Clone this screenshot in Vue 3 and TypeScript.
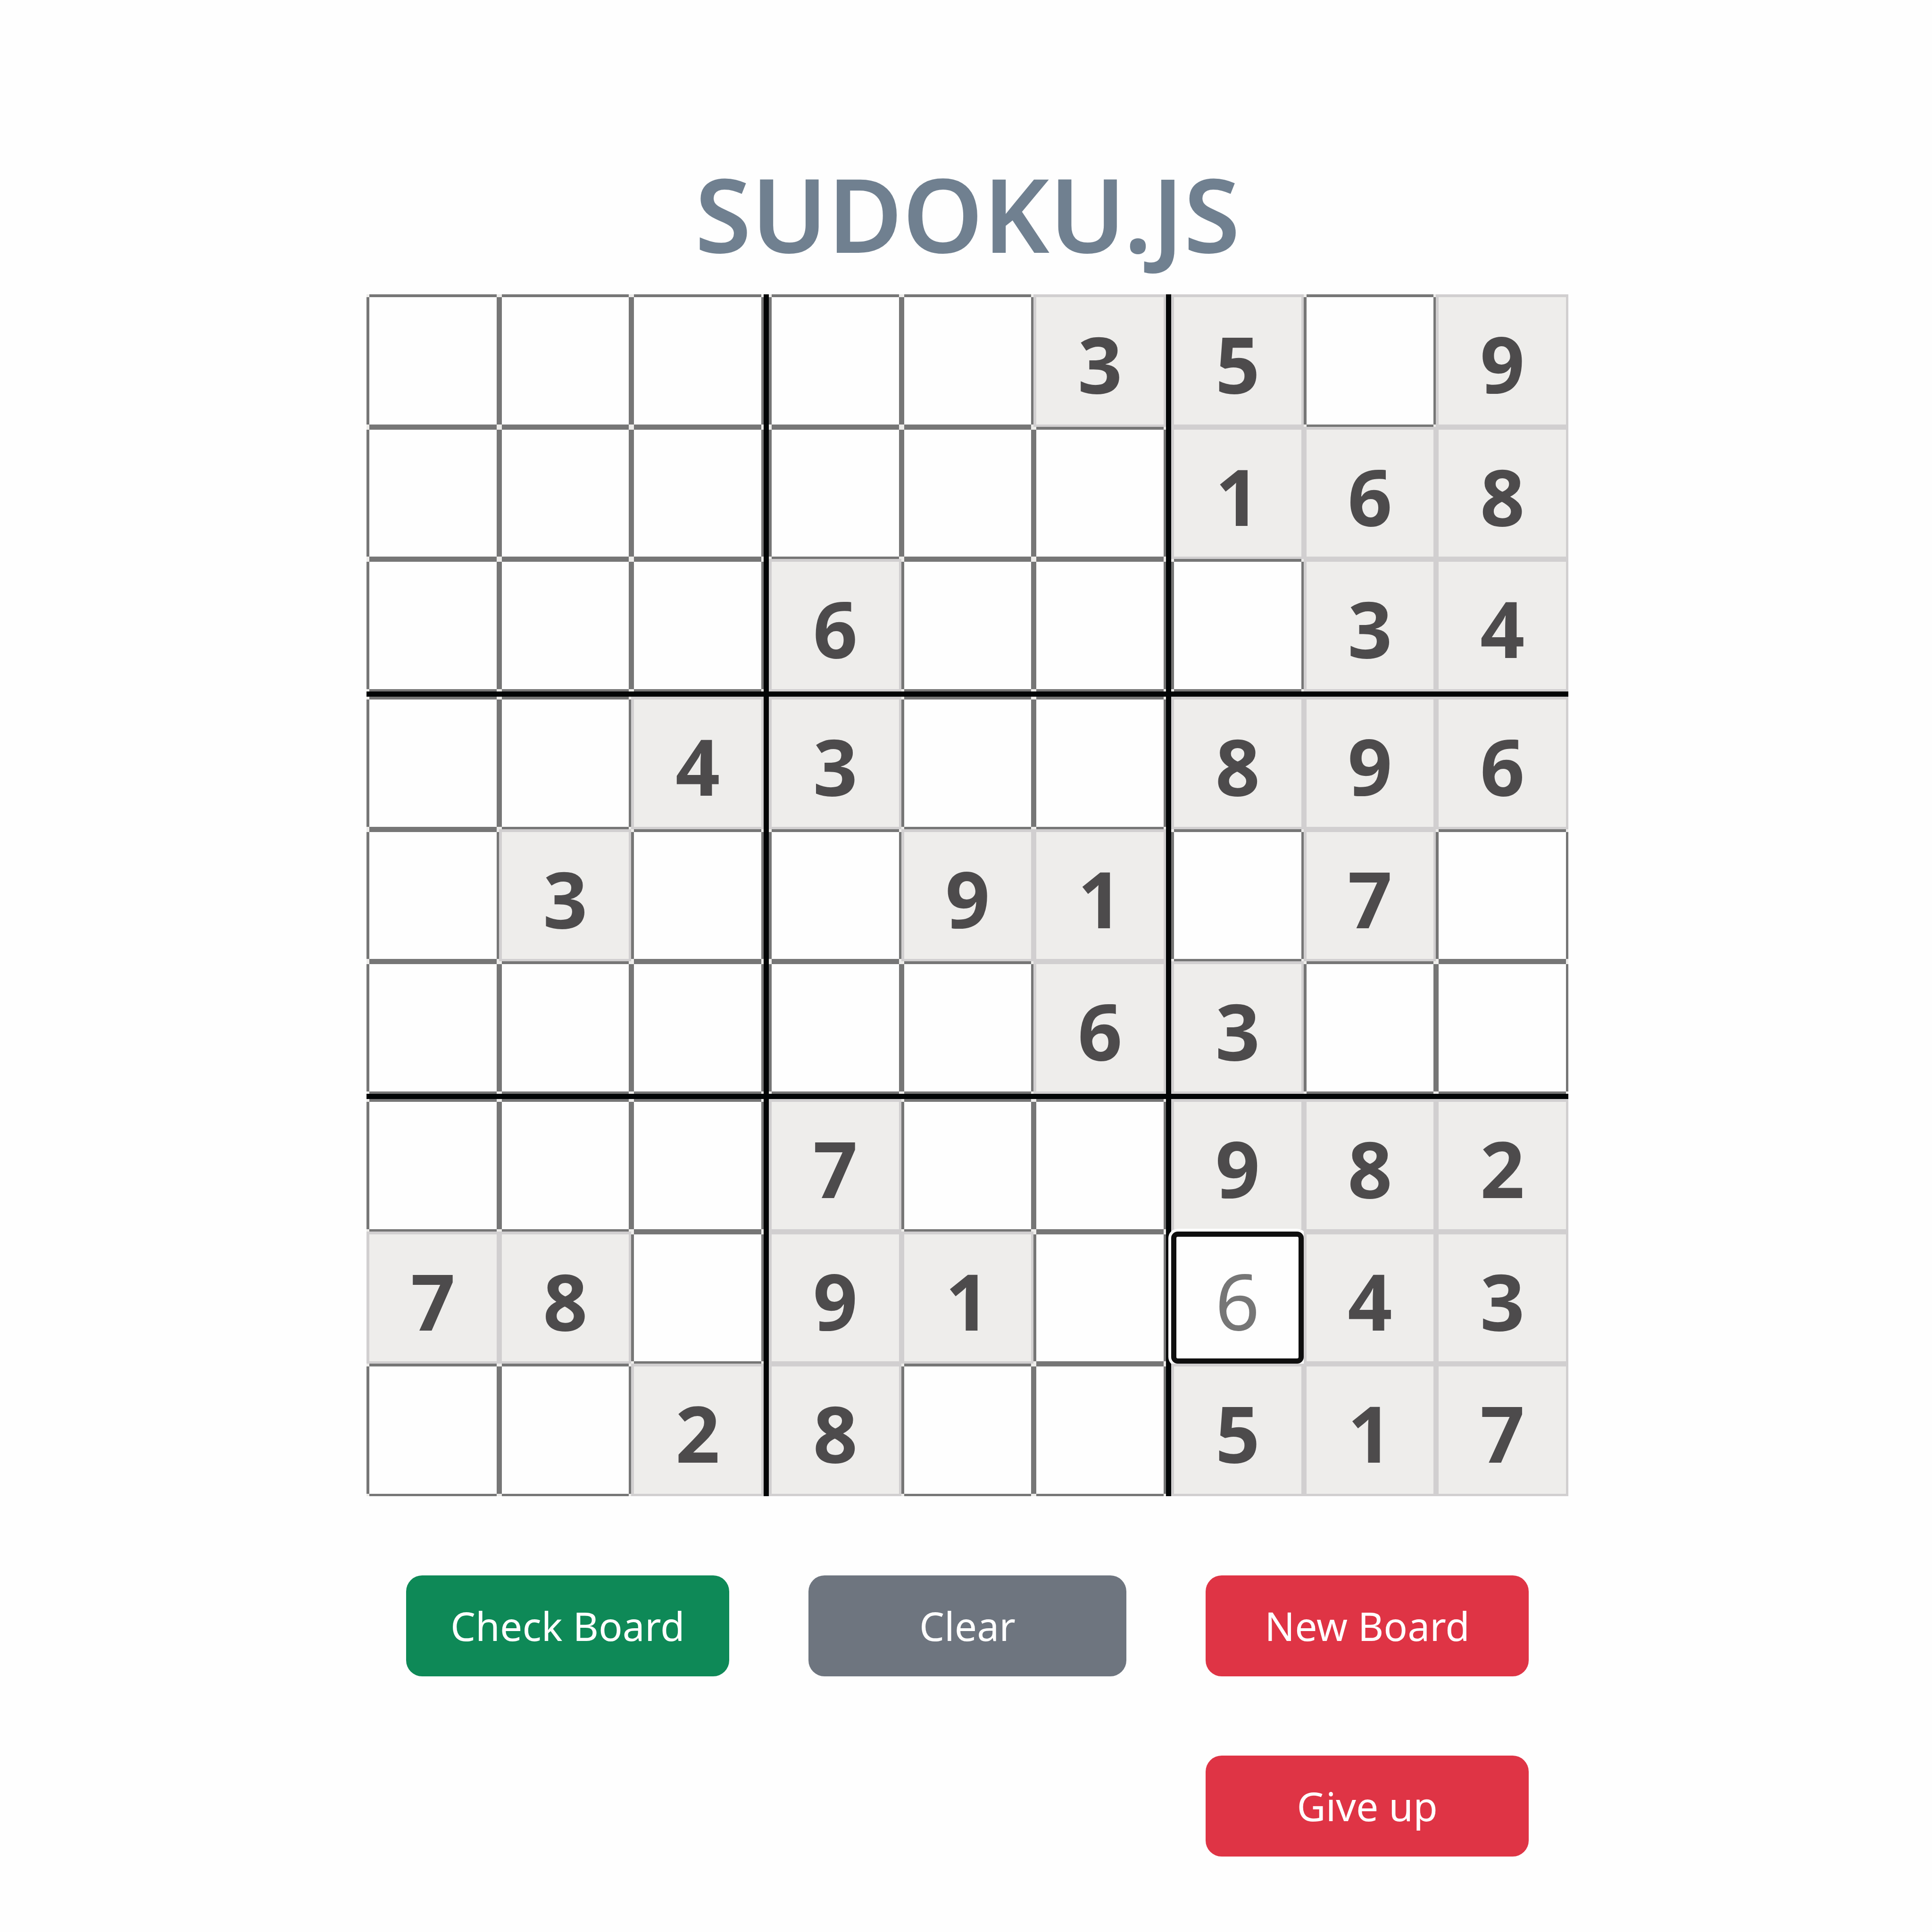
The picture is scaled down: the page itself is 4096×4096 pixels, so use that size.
<script setup lang="ts">
import { reactive } from 'vue'

interface Cell {
  row: number
  col: number
  value: string
  given: boolean
  active: boolean
}

const puzzle: string[] = [
  '.....35.9',
  '......168',
  '...6...34',
  '..43..896',
  '.3..91.7.',
  '.....63..',
  '...7..982',
  '78.91..43',
  '..28..517',
]

const selected = { row: 7, col: 6, value: '6' }

function makeBox(index: number): Cell[] {
  const top = Math.floor(index / 3) * 3
  const left = (index % 3) * 3
  return Array.from({ length: 9 }, (_, i) => {
    const row = top + Math.floor(i / 3)
    const col = left + (i % 3)
    const digit = puzzle[row][col]
    const given = digit !== '.'
    const active = row === selected.row && col === selected.col
    return { row, col, given, active, value: given ? digit : active ? selected.value : '' }
  })
}

const boxes = reactive(Array.from({ length: 9 }, (_, i) => makeBox(i)))

function clearBoard(): void {
  for (const cell of boxes.flat()) {
    if (!cell.given) cell.value = ''
  }
}
</script>

<template>
  <main class="game">
    <h1 class="title">SUDOKU.JS</h1>

    <div class="board">
      <div v-for="(box, b) in boxes" :key="b" class="box">
        <input
          v-for="cell in box"
          :key="cell.row * 9 + cell.col"
          v-model="cell.value"
          class="cell"
          :class="{ given: cell.given, active: cell.active }"
          type="text"
          inputmode="numeric"
          maxlength="1"
          :disabled="cell.given"
          :aria-label="`Row ${cell.row + 1}, column ${cell.col + 1}`"
        />
      </div>
    </div>

    <div class="actions">
      <button type="button" class="btn success">Check Board</button>
      <button type="button" class="btn secondary" @click="clearBoard">Clear</button>
      <button type="button" class="btn danger">New Board</button>
      <button type="button" class="btn danger last">Give up</button>
    </div>
  </main>
</template>

<style>
body {
  margin: 0;
  background: #fefefe;
}
</style>

<style scoped>
.game {
  box-sizing: border-box;
  max-width: 2554px;
  margin: 0 auto;
  padding: 316px 0 160px 6px;
  font-family: 'Segoe UI', 'Noto Sans', 'Open Sans', sans-serif;
}

.title {
  margin: 0 0 36px;
  color: #708090;
  font-size: 217px;
  font-weight: 600;
  line-height: 272px;
  text-align: center;
}

.board {
  display: grid;
  grid-template-columns: repeat(3, minmax(0, 1fr));
  gap: 11px;
  background: #020506;
}

.box {
  display: grid;
  grid-template-columns: repeat(3, minmax(0, 1fr));
}

.cell {
  box-sizing: border-box;
  display: block;
  width: 100%;
  min-width: 0;
  aspect-ratio: 1;
  margin: 0;
  padding: 10px 0 0;
  border: solid transparent;
  border-width: 6px 5px 5px 6px;
  border-radius: 0;
  outline: none;
  background:
    linear-gradient(#fefefe, #fefefe) padding-box,
    linear-gradient(#767676, #767676) 6px 0 / calc(100% - 11px) 100% no-repeat border-box,
    linear-gradient(#767676, #767676) 0 6px / 100% calc(100% - 11px) no-repeat border-box,
    #eeedeb;
  background-origin: padding-box, border-box, border-box;
  color: #767676;
  font-family: inherit;
  font-size: 165px;
  font-weight: 400;
  text-align: center;
}

.cell.given {
  border-color: #d1cfd0;
  background: #eeedeb;
  color: #4d4b4c;
  font-weight: 700;
  opacity: 1;
}

.cell.active {
  border: 11px solid #0f0f0f;
  border-radius: 14px;
  background: #fefefe;
  box-shadow: 0 0 0 6px #fefefe;
}

.actions {
  display: grid;
  grid-template-columns: 684fr 674fr 684fr;
  gap: 168px;
  margin-top: 168px;
  padding: 0 84px;
}

.btn {
  height: 214px;
  padding: 0 24px;
  border: 0;
  border-radius: 34px;
  color: #fff;
  font-family: inherit;
  font-size: 84px;
  line-height: 132px;
  cursor: pointer;
}

.success {
  background: #0e8957;
}

.secondary {
  background: #6e757f;
}

.danger {
  background: #df3445;
}

.last {
  grid-column: 3;
}
</style>
